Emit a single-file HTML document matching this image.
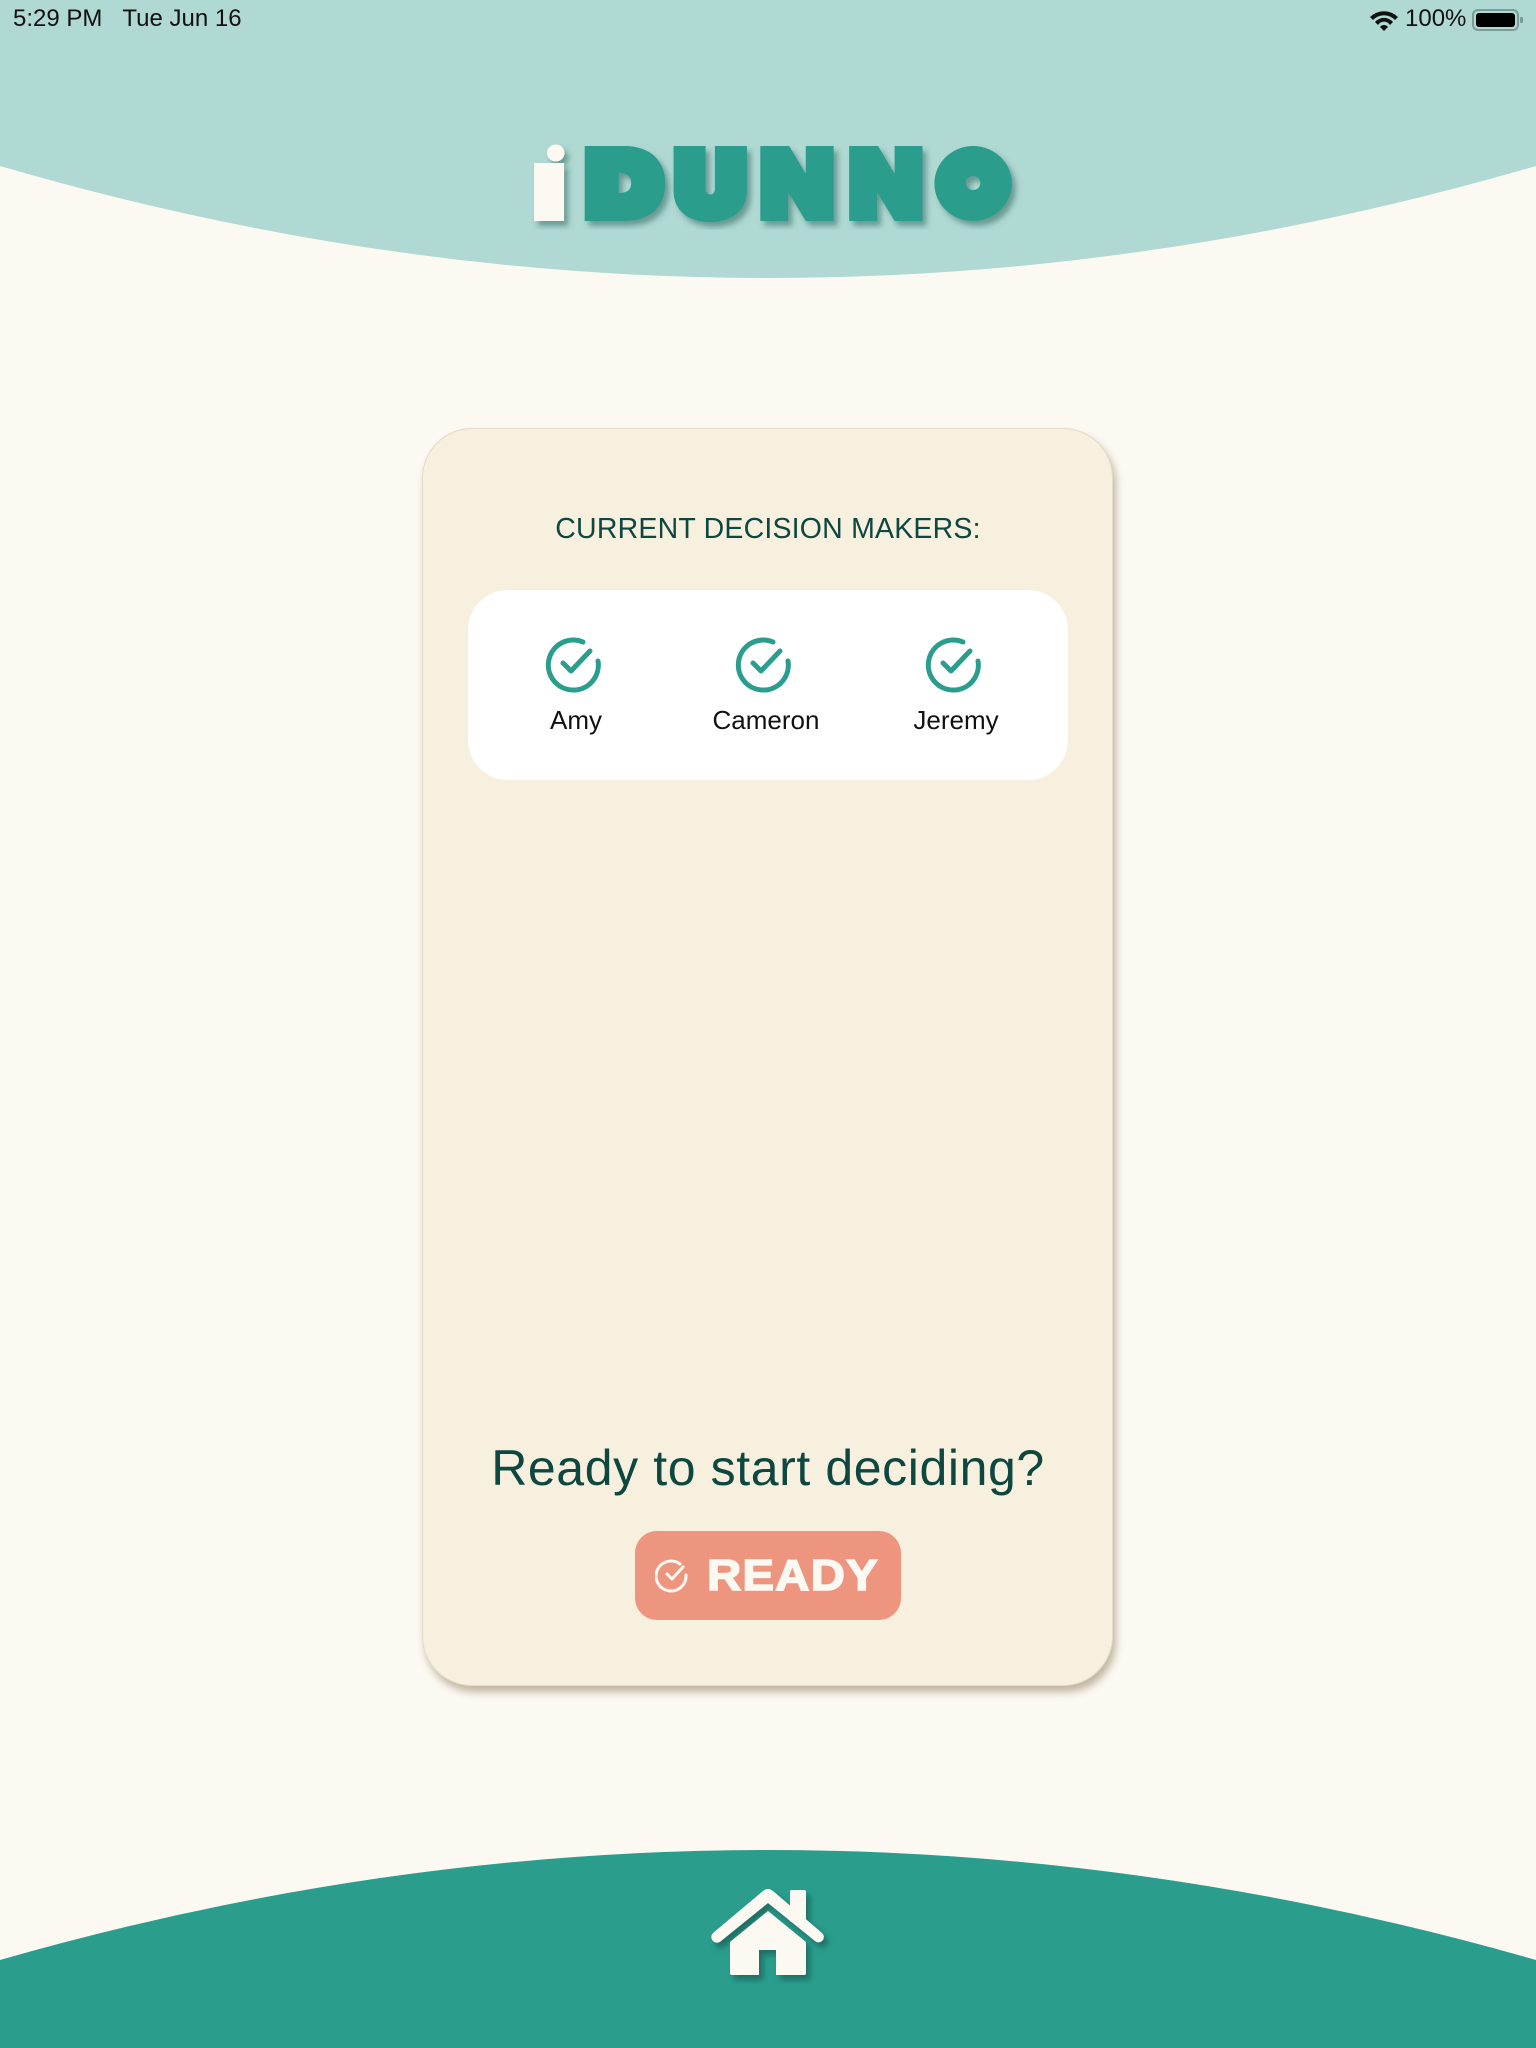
<!DOCTYPE html>
<html><head><meta charset="utf-8"><style>
html,body{margin:0;padding:0}
body{width:1536px;height:2048px;position:relative;overflow:hidden;background:#fcf9f2;font-family:"Liberation Sans",sans-serif}
.abs{position:absolute}
.st{top:5px;font-size:24px;color:#111}
.card{left:422px;top:428px;width:691px;height:1258px;background:#f8f0de;border-radius:50px;border:1px solid #e3dccb;box-sizing:border-box;box-shadow:3px 6px 8px rgba(120,100,60,0.45)}
.hd{left:0;width:1536px;text-align:center;top:513px;font-size:28.5px;color:#0e4640;letter-spacing:0.2px}
.wb{left:468px;top:590px;width:600px;height:190px;background:#fff;border-radius:40px}
.nm{top:705px;font-size:26px;color:#111;width:200px;text-align:center}
.q{left:0;width:1536px;text-align:center;top:1439px;font-size:50px;color:#0e4640;letter-spacing:0.6px}
.btn{left:635px;top:1531px;width:266px;height:89px;background:#ee9580;border-radius:22px}
</style></head><body>
<svg class="abs" style="left:0;top:0" width="1536" height="2048">
<path d="M0 0H1536V166Q768 390 0 166Z" fill="#b0d9d3"/>
<path d="M0 1960Q768 1740 1536 1960V2048H0Z" fill="#2a9d8c"/>
</svg>
<div class="abs st" style="left:13px">5:29 PM&nbsp;&nbsp;&nbsp;Tue Jun 16</div>
<svg class="abs" style="left:1368px;top:8px" width="32" height="24" viewBox="0 0 32 24"><path d="M2 9a20 20 0 0 1 28 0l-3 3a15 15 0 0 0-22 0z M7 14a12 12 0 0 1 18 0l-3 3a7 7 0 0 0-12 0z M12 19a5 5 0 0 1 8 0l-4 4z" fill="#111"/></svg>
<div class="abs st" style="left:1405px">100%</div>
<svg class="abs" style="left:1472px;top:9px" width="52" height="22"><rect x="1" y="1" width="45" height="20" rx="5" fill="none" stroke="#7a9c97" stroke-width="2"/><rect x="4" y="4" width="39" height="14" rx="3" fill="#000"/><rect x="48" y="8" width="3" height="6" rx="1" fill="#7a9c97"/></svg>
<svg class="abs" style="left:520px;top:130px" width="530" height="110">
<defs><filter id="sh"><feDropShadow dx="4" dy="5" stdDeviation="3" flood-color="#1d5a52" flood-opacity="0.5"/></filter></defs>
<g filter="url(#sh)"><g transform="translate(-20 0) scale(1.033 1) translate(20 0)">
<circle cx="34" cy="23" r="8.5" fill="#fcf9f2"/>
<rect x="13" y="33" width="29" height="58" fill="#fcf9f2"/>
<path d="M62 16h38c28 0 40 17 40 37.5s-12 37.5-40 37.5h-38z M95 43v20c8 0 12-3 12-10s-4-10-12-10z" fill="#2a9d8c" fill-rule="evenodd"/>
<path d="M148 16h31v44a4.5 4.5 0 0 0 9 0v-44h31v45c0 20-15 31-35.5 31s-35.5-11-35.5-31z" fill="#2a9d8c"/>
<path d="M232 16h28l16 28v-28h27v75h-27l-17-29v29h-27z" fill="#2a9d8c"/>
<path d="M318 16h28l16 28v-28h27v75h-27l-17-29v29h-27z" fill="#2a9d8c"/>
<path d="M438 16a37.5 37.5 0 1 1 0 75a37.5 37.5 0 1 1 0-75z M438 46a7 7 0 1 0 0 14a7 7 0 1 0 0-14z" fill="#2a9d8c" fill-rule="evenodd"/>
</g></g></svg>
<div class="abs card"></div>
<div class="abs hd">CURRENT DECISION MAKERS:</div>
<div class="abs wb"></div>
<svg class="abs" style="left:0;top:630px" width="1536" height="80">
<g fill="none" stroke="#2a9d8c" stroke-width="5" stroke-linecap="round" stroke-linejoin="round">
<g transform="translate(573,35)"><path d="M25 -4A25 25 0 1 1 10 -23"/><path d="M-10 -2l8 8 19-20"/></g>
<g transform="translate(763,35)"><path d="M25 -4A25 25 0 1 1 10 -23"/><path d="M-10 -2l8 8 19-20"/></g>
<g transform="translate(953,35)"><path d="M25 -4A25 25 0 1 1 10 -23"/><path d="M-10 -2l8 8 19-20"/></g>
</g></svg>
<div class="abs nm" style="left:476px">Amy</div>
<div class="abs nm" style="left:666px">Cameron</div>
<div class="abs nm" style="left:856px">Jeremy</div>
<div class="abs q">Ready to start deciding?</div>
<div class="abs btn"></div>
<svg class="abs" style="left:655px;top:1556px" width="40" height="40"><g fill="none" stroke="#fcf9f2" stroke-width="3" stroke-linecap="round" stroke-linejoin="round"><path d="M31 19A15 15 0 1 1 25 8"/><path d="M12 18l5 5 11-12"/></g></svg>
<div class="abs" style="left:707px;top:1551px;font-size:44px;font-weight:900;color:#fcf9f2;letter-spacing:1px;transform:scaleX(1.08);transform-origin:left;-webkit-text-stroke:1.5px #fcf9f2">READY</div>
<svg class="abs" style="left:700px;top:1870px" width="140" height="120">
<defs><filter id="sh2"><feDropShadow dx="4" dy="5" stdDeviation="3" flood-color="#0d4a42" flood-opacity="0.55"/></filter></defs>
<g filter="url(#sh2)" fill="#fcf9f2">
<rect x="90" y="20" width="16" height="32" rx="2"/>
<path d="M13 63L63 21q5-4 10 0L122 63a5 5 0 0 1-7 8L68 33L21 71a5 5 0 0 1-8-8z"/>
<path d="M68 41L106 72V103a2 2 0 0 1-2 2H76V80H59V105H32a2 2 0 0 1-2-2V72z"/>
</g></svg>
</body></html>
